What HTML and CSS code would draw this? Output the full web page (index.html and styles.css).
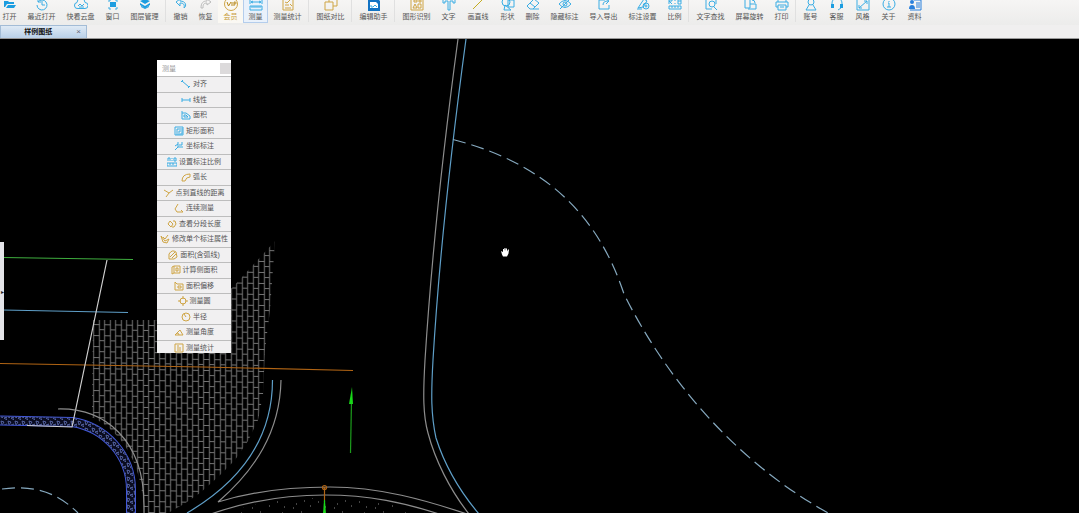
FILE: index.html
```html
<!DOCTYPE html>
<html lang="zh-CN">

<head>
    <meta charset="UTF-8">
    <meta name="viewport" content="width=device-width, initial-scale=1.0">
    <title>样例图纸</title>
    <link rel="stylesheet" href="styles.css">
</head>

<body>
    <header class="toolbar">
        <button class="tool w2"><svg class="blue" viewBox="0 0 14 14"><path class="fill" d="M1 4h4l1 1h5v2H4l-2 3H1zM5 8h8l-2 3H3z"/></svg>打开</button>
        <button class="tool w4"><svg class="blue" viewBox="0 0 14 14"><path d="M3 5a5 5 0 1 1-1 3M3 2v3h3M7 4v4h3"/></svg>最近打开</button>
        <button class="tool w4"><svg class="blue" viewBox="0 0 14 14"><path d="M4 11.500a3 3 0 0 1-1-6 4 4 0 0 1 8 0 3 3 0 0 1 0 6zM4 9l2-2 2 2 2-2M5 10h5"/></svg>快看云盘</button>
        <button class="tool w2"><svg class="blue" viewBox="0 0 14 14"><path class="fill" d="M4 5h6v5H4z"/><path d="M3 5V3h2M9 3h2v2M11 10v2H9M5 12H3v-2"/></svg>窗口</button>
        <button class="tool w4"><svg class="blue" viewBox="0 0 14 14"><path class="fill" d="M7 2l5 2-5 3-5-3zM2 6l5 3 5-3v2l-5 3-5-3zM3 9l4 2 4-2v1l-4 2-4-2z"/></svg>图层管理</button>
        <span class="sep"></span>
        <button class="tool w2"><svg class="blue" viewBox="0 0 14 14"><path d="M6 2L2 5l4 4V6c3 0 5 1 4 5 3-2 2-7-4-7z"/></svg>撤销</button>
        <button class="tool w2"><svg class="gray" viewBox="0 0 14 14"><path d="M8 2l4 3-4 3V6c-3 0-4 1-4 5H2c0-5 2-7 6-7z"/></svg>恢复</button>
        <button class="tool w2 vip"><svg class="gold" viewBox="0 0 14 14"><circle cx="7" cy="7" r="6.500"/><path class="bold" d="M3 5l1.500 4L7 5M8 5v4M10 9V5c3 0 3 2 0 2"/></svg>会员</button>
        <button class="tool w2 active"><svg class="blue" viewBox="0 0 14 14"><path d="M1 3v4M13 3v4M2 5h10M4 4L2 5l2 1M10 4l2 1-2 1M1 9h12v4H1zM3 9v2M5 9v2M7 9v2M9 9v2M11 9v2"/></svg>测量</button>
        <button class="tool w4"><svg class="gold" viewBox="0 0 14 14"><path d="M2 2h10v11H2zM4 5l2 1 3-3M4 8h4M4 11h6M9 7l2 2"/></svg>测量统计</button>
        <span class="sep"></span>
        <button class="tool w4"><svg class="gold" viewBox="0 0 14 14"><path d="M5 1h8v8H9M5 1v4M1 5h8v8H1z"/></svg>图纸对比</button>
        <span class="sep"></span>
        <button class="tool w4"><svg class="blue" viewBox="0 0 14 14"><path class="solid" d="M1 1h9l3 3v10H1z"/><path class="paper" d="M3 5h6l2 2v4H3z"/><path d="M4 8v2h2l2-2 2 2"/></svg>编辑助手</button>
        <span class="sep"></span>
        <button class="tool w4"><svg class="gold" viewBox="0 0 14 14"><path d="M1 1h12v12H1zM3 11l2-4 2 4zM8 7h3v4H8zM4 3h3v2H4zM9 3h2v2H9z"/></svg>图形识别</button>
        <button class="tool w2"><svg class="blue" viewBox="0 0 14 14"><path d="M1 2h12v4h-2V4H8v9H6V4H3v2H1z"/></svg>文字</button>
        <button class="tool w3"><svg class="yellow" viewBox="0 0 14 14"><path d="M2 12L12 2"/></svg>画直线</button>
        <button class="tool w2"><svg class="blue" viewBox="0 0 14 14"><circle cx="5" cy="5" r="4"/><path d="M7 3h6v7H7zM4 8l6 5H3z"/></svg>形状</button>
        <button class="tool w2"><svg class="blue" viewBox="0 0 14 14"><path d="M8 2l5 4-6 6H4L1 9zM4 6l5 4M7 12h6"/></svg>删除</button>
        <button class="tool w4"><svg class="blue" viewBox="0 0 14 14"><path d="M1 7q6-7 12 0-6 7-12 0M12 2L2 12"/><circle cx="7" cy="7" r="2"/></svg>隐藏标注</button>
        <button class="tool w4"><svg class="blue" viewBox="0 0 14 14"><path d="M8 3H2v9h10V8M6 8c0-3 2-4 5-4M9 2l3 2-3 3"/></svg>导入导出</button>
        <button class="tool w4"><svg class="blue" viewBox="0 0 14 14"><path d="M1 12h5M2 11l6-9 3 2-4 6z"/><circle cx="10" cy="9" r="3"/><circle cx="10" cy="9" r="1"/></svg>标注设置</button>
        <button class="tool w2"><svg class="blue" viewBox="0 0 14 14"><path d="M1 7V2h3v2H1l3 3M7 3v1M7 6v1M10 2v5h3V2zM10 4h3M1 9h12v3H1zM4 9v2M7 9v2M10 9v2"/></svg>比例</button>
        <span class="sep"></span>
        <button class="tool w4"><svg class="blue" viewBox="0 0 14 14"><path d="M8 12H2V2h10v5M10 10l3 3"/><circle cx="8" cy="7" r="3"/></svg>文字查找</button>
        <button class="tool w4"><svg class="blue" viewBox="0 0 14 14"><path d="M2 2h5v9H2zM7 7h6v5H5M9 3q3 0 3 3"/></svg>屏幕旋转</button>
        <button class="tool w2"><svg class="blue" viewBox="0 0 14 14"><path d="M3 5V2h8v3M3 10H1V5h12v5h-2M3 8h8v5H3zM5 10h4"/></svg>打印</button>
        <span class="sep"></span>
        <div class="account">
            <button class="tool w2"><svg class="blue" viewBox="0 0 14 14"><circle cx="7" cy="5" r="3"/><path d="M5 8l-3 5h10L9 8"/></svg>账号</button>
            <button class="tool w2"><svg class="blue" viewBox="0 0 14 14"><path d="M2 8V6a5 5 0 0 1 10 0v2M11 11l-3 2"/><path class="fill" d="M1 7h3v4H1zM10 7h3v4h-3z"/></svg>客服</button>
            <button class="tool w2"><svg class="blue" viewBox="0 0 14 14"><path d="M1 2h12v11H1zM3 11l8-7M8 4h3v3M3 8v3h3"/></svg>风格</button>
            <button class="tool w2"><svg class="blue" viewBox="0 0 14 14"><circle cx="7" cy="7" r="6"/><path d="M7 4v1M6 6h1v4M5 10h4"/></svg>关于</button>
            <button class="tool w2"><svg class="royal" viewBox="0 0 14 14"><circle class="fill" cx="4" cy="5" r="2"/><path class="fill" d="M1 12q0-4 3-4t3 4z"/><path d="M6 3h7v10H2M8 6h4M8 8h4M8 10h4"/></svg>资料</button>
        </div>
    </header>

    <nav class="tabs">
        <div class="tab"><span>样例图纸</span><button class="tab-close" aria-label="关闭">×</button></div>
    </nav>

    <main class="workspace">
        <svg class="drawing" viewBox="0 39 1079 474" preserveAspectRatio="xMinYMin slice">
            <defs>
                <pattern id="brick" width="11" height="11" patternUnits="userSpaceOnUse" patternTransform="translate(91 320) skewY(1)">
                    <path d="M2.500 0V11M8.500 0V11M3 4.500H8M9 9.500H11M0 9.500H2" fill="none" stroke="#757575" stroke-width="1"/>
                </pattern>
                <pattern id="gravel" width="7" height="7" patternUnits="userSpaceOnUse">
                    <path d="M1 1l3 1-2 3zM4 5l3-1 0 3z" fill="none" stroke="#6272b8" stroke-width=".8"/>
                </pattern>
                <pattern id="speckle" width="41" height="17" patternUnits="userSpaceOnUse">
                    <path d="M3 4h1M9 11h1M14 2h1M17 8h1M23 13h1M25 5h1M31 9h1M36 3h1M38 14h1M6 15h1" stroke="#888" stroke-width="1"/>
                </pattern>
            </defs>

            <!-- paving -->
            <path fill="url(#brick)" d="M93 320H158L232 288 275 241 270 310 265 350 263 395 258 420 248 441 235 460 218 477 200 493 184 504 168 513H144C143 475 130 436 92 417z"/>

            <!-- kerb -->
            <path class="kerb" d="M0 420.500L72 422C105 427 131 455 131 490V514"/>
            <path class="kerb-gap" d="M0 420.500L72 422C105 427 131 455 131 490V514"/>
            <path class="kerb-fill" d="M0 420.500L72 422C105 427 131 455 131 490V514"/>

            <!-- survey lines -->
            <path class="line green" d="M3 257.500L133 259.500"/>
            <path class="line sky" d="M3 310L128 312.500"/>
            <path class="line orange" d="M0 363.500L203 367 353 370.500"/>
            <path class="line white" d="M107 260L72 427 27 425.500"/>

            <!-- road edges -->
            <path class="line" d="M58 409C105 408 144 440 144 505V513"/>
            <path class="line sky" d="M272.500 380C272.500 440 240 482 187 513"/>
            <path class="line" d="M281 380C280 432 255 470 218 502C260 489 300 487 330 487C380 487 425 500 467 514"/>
            <path class="line" d="M211 514C245 502 285 495 325 495C370 495 405 503 439 514"/>
            <path fill="url(#speckle)" d="M225 514C255 502 290 498 325 498C370 498 400 505 428 514z"/>
            <path class="line" d="M458 39C443 150 432 250 425 360C423 395 423 415 428 433C435 460 450 490 469 514"/>
            <path class="line sky" d="M466 39C451 150 439 260 433 360C431 395 431 415 436 438C443 460 457 488 479 514"/>
            <path class="line dash" d="M453 139.500C545 163 598 215 624 294C665 377 735 462 830 514"/>
            <path class="line dash" d="M2 489C30 485 55 490 78 513"/>

            <!-- direction arrows -->
            <path class="line lime" d="M350.500 453L351.500 400"/>
            <path fill="#18d818" d="M352 387l1 17h-4z"/>
            <path class="line orange" d="M324.500 487V502"/>
            <circle class="line orange" cx="324.500" cy="487.500" r="2"/>
            <path fill="#18d818" d="M324 500h1l1 14h-3z"/>

            <!-- pan cursor -->
            <path fill="#fff" d="M501 251l2 1v-3h1v2l.5-3h1v3l.5-2.500h1v3l1-2h1l-.5 4-1.500 3h-4l-1-2z"/>
        </svg>

        <button class="drawer" aria-label="展开">▸</button>

        <section class="panel">
            <div class="panel-head"><span>测量</span><button class="panel-close" aria-label="关闭"></button></div>
            <div class="panel-body">
                <div class="panel-list">
                    <button class="item"><svg class="blue" viewBox="0 0 10 10"><path d="M1 2l7 6M0 3l2-2M7 9l2-2"/></svg>对齐</button>
                    <button class="item"><svg class="blue" viewBox="0 0 10 10"><path d="M1 3v4M9 3v4M1 5h8"/></svg>线性</button>
                    <button class="item"><svg class="blue" viewBox="0 0 10 10"><path d="M1 1v8h8V6L5 3H1M3 5h2l2 2H3z"/></svg>面积</button>
                    <button class="item"><svg class="blue" viewBox="0 0 10 10"><path d="M1 1h8v8H1zM3 9V3h6M5 9V5h4M7 9V7h2"/></svg>矩形面积</button>
                    <button class="item"><svg class="blue" viewBox="0 0 10 10"><path d="M4 1v5h5M4 6L1 9M5 4h3V1M1 5l3-2"/></svg>坐标标注</button>
                    <button class="item"><svg class="blue" viewBox="0 0 10 10"><path d="M1 4V1h2v3M5 1v1M5 3v1M7 1v3h2V1zM0 6h10v3H0zM3 6v2M6 6v2"/></svg>设置标注比例</button>
                    <button class="item"><svg class="gold" viewBox="0 0 10 10"><path d="M1 9q0-7 8-7v3q-4 0-5 4z"/></svg>弧长</button>
                    <button class="item"><svg class="gold" viewBox="0 0 10 10"><path d="M0 2l5 3 4-3M5 5L2 9"/></svg>点到直线的距离</button>
                    <button class="item"><svg class="gold" viewBox="0 0 10 10"><path d="M4 1L1 6l2 3h6M7 7l2 2"/></svg>连续测量</button>
                    <button class="item"><svg class="gold" viewBox="0 0 10 10"><path d="M3 2L1 5l3 3 2-3zM6 2h2l1 3-2 3H5"/></svg>查看分段长度</button>
                    <button class="item"><svg class="gold" viewBox="0 0 10 10"><path d="M1 2l2 6 4 1 2-4-4 2zM3 3l2 2 3-4"/></svg>修改单个标注属性</button>
                    <button class="item"><svg class="gold" viewBox="0 0 10 10"><path d="M1 9V4q3-5 7-2l1 5-3 2zM2 7l5-5M4 8l4-4"/></svg>面积(含弧线)</button>
                    <button class="item"><svg class="gold" viewBox="0 0 10 10"><path d="M1 2l2-1h6v7H3L1 9zM3 1v7M5 3h2v3H5z"/></svg>计算侧面积</button>
                    <button class="item"><svg class="gold" viewBox="0 0 10 10"><path d="M1 1l2 2h6v6H1zM4 5h3v2H4z"/></svg>面积偏移</button>
                    <button class="item"><svg class="gold" viewBox="0 0 10 10"><circle cx="5" cy="5" r="3"/><path d="M5 0v3M5 7v3M0 5h3M7 5h3"/></svg>测量圆</button>
                    <button class="item"><svg class="gold" viewBox="0 0 10 10"><circle cx="5" cy="5" r="4"/><path d="M5 5L3 2"/></svg>半径</button>
                    <button class="item"><svg class="gold" viewBox="0 0 10 10"><path d="M1 8l5-5 3 5zM3 6q2 0 2 2"/></svg>测量角度</button>
                    <button class="item"><svg class="gold" viewBox="0 0 10 10"><path d="M1 1h8v8H1zM3 3h2M3 5h4M3 7h4"/></svg>测量统计</button>
                </div>
            </div>
        </section>
    </main>
</body>

</html>
```

FILE: styles.css
```css
body {
    margin: 0;
    height: 100vh;
    display: flex;
    flex-direction: column;
    overflow: hidden;
    background-color: #000;
    color: #555;
    font-family: "Liberation Sans", "Noto Sans CJK SC", sans-serif;
    font-size: 7px;
}

button {
    margin: 0;
    padding: 0;
    border: none;
    background: none;
    color: inherit;
    font: inherit;
    white-space: nowrap;
    cursor: pointer;
}

svg {
    fill: none;
    stroke-width: 1;
}

/* icon colours */
.blue {
    stroke: #3aade4;
    color: #1c9de0;
}

.royal {
    stroke: #2a80dc;
    color: #2a80dc;
}

.gold {
    stroke: #cfa545;
    color: #cfa545;
}

.yellow {
    stroke: #c4ac20;
}

.gray {
    stroke: #bbb;
}

.fill {
    fill: currentColor;
    stroke: none;
}

.solid {
    fill: #1273c4;
    stroke: none;
}

.paper {
    fill: #fff;
    stroke: none;
}

.bold {
    stroke: #b98a1c;
}

/* toolbar */
.toolbar {
    display: flex;
    flex: none;
    height: 25px;
    padding-right: 8px;
    margin-left: -3px;
    background: linear-gradient(#f6f5f4, #ececeb);
    overflow: hidden;
}

.tool {
    flex: none;
    display: flex;
    flex-direction: column;
    align-items: center;
    gap: 1px;
    height: 26px;
    margin-top: -3px;
    line-height: 10px;
    box-sizing: border-box;
}

.tool svg {
    width: 14px;
    height: 14px;
    flex: none;
}

.w2 {
    width: 25px;
}

.w3 {
    width: 34px;
}

.w4 {
    width: 39px;
}

.account {
    display: flex;
    gap: 1px;
}

.active {
    background-color: #e9f1fb;
    box-shadow: inset 0 0 0 1px #b4cdec;
}

.vip {
    background-color: #faf8f3;
    color: #c9a040;
}

.sep {
    flex: none;
    width: 1px;
    height: 22px;
    margin: 0 2px 0 1px;
    background-color: #e0e0e0;
}

/* tabs */
.tabs {
    flex: none;
    display: flex;
    height: 13px;
    background-color: #f0efef;
    border-bottom: 1px solid #999;
}

.tab {
    display: flex;
    align-items: center;
    justify-content: flex-end;
    gap: 24px;
    width: 87px;
    padding-right: 5px;
    box-sizing: border-box;
    border: 1px solid #a3bcd6;
    border-bottom: none;
    background: linear-gradient(#dfeaf5, #b9d0e8);
    color: #111;
    font-weight: bold;
    line-height: 10px;
}

.tab-close {
    color: #667;
    font-weight: normal;
    font-size: 8px;
}

/* drawing area */
.workspace {
    position: relative;
    flex: 1;
    min-height: 0;
}

.drawing {
    display: block;
    width: 100%;
    height: 100%;
}

.line {
    fill: none;
    stroke: #8d8d8d;
    stroke-width: 1.2;
}

.sky {
    stroke: #5f9fc8;
}

.green {
    stroke: #3fae3f;
}

.lime {
    stroke: #1c9c1c;
}

.orange {
    stroke: #b06414;
}

.white {
    stroke: #cfcfcf;
}

.dash {
    stroke: #86a9bf;
    stroke-dasharray: 13 6;
}

.kerb {
    stroke: #4258d8;
    stroke-width: 10;
}

.kerb-gap {
    stroke: #0a0c20;
    stroke-width: 8;
}

.kerb-fill {
    stroke: url(#gravel);
    stroke-width: 8;
}

.drawer {
    position: absolute;
    left: 0;
    top: 203px;
    width: 4px;
    height: 98px;
    overflow: hidden;
    background-color: #e4e4e8;
    color: #222;
    font-size: 6px;
}

/* measure panel */
.panel {
    position: absolute;
    left: 157px;
    top: 21px;
    width: 74px;
    background-color: #f1f0f1;
}

.panel-head {
    display: flex;
    align-items: center;
    justify-content: space-between;
    height: 16px;
    padding-left: 5px;
    background-color: #fff;
    color: #999;
}

.panel-close {
    width: 11px;
    height: 11px;
    background-color: #dcdadb;
}

.panel-body {
    height: 277px;
    overflow: hidden;
}

.panel-list {
    display: flex;
    flex-direction: column;
    height: 279px;
}

.item {
    flex: 1;
    display: flex;
    align-items: center;
    justify-content: center;
    gap: 2px;
    border-top: 1px solid #bdbdbd;
    line-height: 10px;
}

.item svg {
    width: 10px;
    height: 10px;
    flex: none;
}
```
